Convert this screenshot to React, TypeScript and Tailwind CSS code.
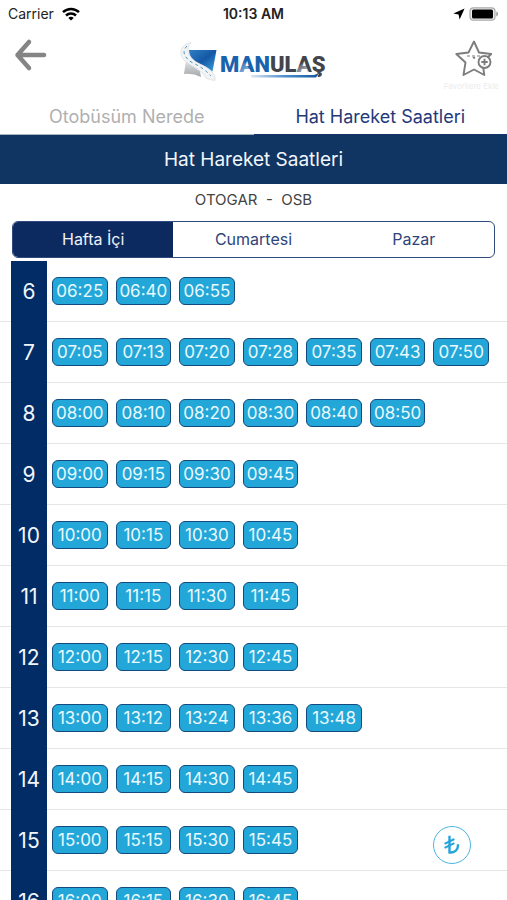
import React, { useState } from 'react';

interface HourRow {
  hour: number;
  minutes: string[];
}

const quarters = ['00', '15', '30', '45'];

const timetable: HourRow[] = [
  { hour: 6, minutes: ['25', '40', '55'] },
  { hour: 7, minutes: ['05', '13', '20', '28', '35', '43', '50'] },
  { hour: 8, minutes: ['00', '10', '20', '30', '40', '50'] },
  { hour: 9, minutes: quarters },
  { hour: 10, minutes: quarters },
  { hour: 11, minutes: quarters },
  { hour: 12, minutes: quarters },
  { hour: 13, minutes: ['00', '12', '24', '36', '48'] },
  { hour: 14, minutes: quarters },
  { hour: 15, minutes: quarters },
  { hour: 16, minutes: quarters },
];

const days = ['Hafta İçi', 'Cumartesi', 'Pazar'];

const StatusBar = () => (
  <div className="grid h-7 shrink-0 grid-cols-3 items-center px-2 text-sm text-[#222]">
    <div className="flex items-center gap-2">
      <span>Carrier</span>
      <svg width="18" height="14" viewBox="0 0 18 14" fill="none" stroke="#000" strokeWidth="2.5">
        <path d="M1 5.2C5.5 0.9 12.5 0.9 17 5.2" />
        <path d="M4 8.5C6.8 5.9 11.2 5.9 14 8.5" />
        <path d="M9 13.6L6.3 10.9C7.8 9.5 10.2 9.5 11.7 10.9Z" fill="#000" stroke="none" />
      </svg>
    </div>
    <span className="text-center font-semibold">10:13 AM</span>
    <div className="flex items-center justify-end gap-1">
      <svg width="12" height="12" viewBox="0 0 12 12">
        <path d="M11.6 0.4L6.6 11.6L5.6 6.4L0.4 5.4Z" fill="#000" />
      </svg>
      <svg width="30" height="14" viewBox="0 0 30 14">
        <rect x="1" y="0.8" width="25" height="12.4" rx="3.5" fill="#eee" stroke="#aaa" strokeWidth="1.2" />
        <rect x="3" y="2.6" width="21" height="8.8" rx="1.5" fill="#000" />
        <path d="M27.3 4.5C29.6 5.3 29.6 8.7 27.3 9.5Z" fill="#999" />
      </svg>
    </div>
  </div>
);

const Logo = () => (
  <svg width="150" height="44" viewBox="0 0 150 44" role="img" aria-label="MANULAŞ">
    <defs>
      <linearGradient id="badge" x1="0" y1="0" x2="1" y2="1">
        <stop offset="0" stopColor="#2f7fc4" />
        <stop offset="0.5" stopColor="#1558a6" />
        <stop offset="1" stopColor="#3aa5e0" />
      </linearGradient>
      <linearGradient id="road" x1="0" y1="0" x2="0" y2="1">
        <stop offset="0" stopColor="#e4e6e8" />
        <stop offset="1" stopColor="#a2a6aa" />
      </linearGradient>
      <linearGradient id="underline" x1="0" y1="0" x2="1" y2="0">
        <stop offset="0" stopColor="#dfe5f3" />
        <stop offset="0.5" stopColor="#4d8fcb" />
        <stop offset="1" stopColor="#14559f" />
      </linearGradient>
      <linearGradient id="fade" x1="0" y1="0" x2="1" y2="1">
        <stop offset="0" stopColor="#fff" stopOpacity="0" />
        <stop offset="1" stopColor="#fff" stopOpacity="0.7" />
      </linearGradient>
    </defs>
    <path d="M7 20L5 34Q14 33 22 37L20 26Z" fill="url(#road)" />
    <path d="M10 10H37.5L33.5 31.5Q27 26 19 23Q10 19 10 10Z" fill="url(#badge)" />
    <path d="M12 2.5C0 5 -1 15 7 22C15 28 24 31 27 38Q31 40 36 40.5C37 34 31 29 22 24.5C12 20 5 12 12 2.5Z" fill="#f1f3f4" stroke="#d3d7da" strokeWidth="0.6" />
    <path d="M8 6C2 12 6 18 13 22.5Q25 28 32 36" fill="none" stroke="#4a8fc2" strokeWidth="1" strokeDasharray="3 3" />
    <text x="41" y="32" fontFamily="Roboto, sans-serif" fontSize="22" fontWeight="900">
      <tspan fill="#1962ad">MAN</tspan>
      <tspan fill="#41454d">ULAŞ</tspan>
    </text>
    <path d="M61 25L66 22L72 32H61Z" fill="url(#fade)" />
    <path d="M119 27L125 22L130 32H118Z" fill="url(#fade)" />
    <path d="M72 35H135L140 33L137 37.5H72Z" fill="url(#underline)" />
  </svg>
);

const Header = () => (
  <header className="flex h-[70px] shrink-0 items-start justify-between px-2">
    <div className="flex flex-1">
      <button aria-label="Geri" className="px-1.5 py-2.5">
        <svg width="34" height="34" viewBox="0 0 34 34" fill="none" stroke="#858585" strokeWidth="4.5" strokeLinecap="round" strokeLinejoin="round">
          <path d="M30 17H3.5M15 4L3.5 17L15 30" />
        </svg>
      </button>
    </div>
    <div className="pt-3">
      <Logo />
    </div>
    <div className="flex flex-1 justify-end">
      <button className="flex flex-col items-center gap-0.5 pt-3">
        <svg width="46" height="38" viewBox="-6 0 46 38" fill="none" stroke="#7d7d7d" strokeWidth="1.9" strokeLinejoin="round">
          <path d="M20 1.5L25 12.5L37.2 14L28.5 22.5L30.3 35L20 29.5L9.5 35L11.5 22.5L2.3 14L14.5 12.5Z" />
          <path d="M13 16H27" strokeDasharray="3 2" strokeWidth="1.2" />
          <path d="M19 17L20 18.5L21 17" strokeWidth="1.2" />
          <circle cx="30.5" cy="22" r="6" fill="#fff" />
          <path d="M30.5 18.8V25.2M27.3 22H33.7" />
        </svg>
        <span className="text-[8px] leading-3 text-[#ececec]">Favorilere Ekle</span>
      </button>
    </div>
  </header>
);

const App: React.FC = () => {
  const [tab, setTab] = useState('saatler');
  const [day, setDay] = useState(days[0]);

  const tabClass = (name: string) =>
    `flex-1 border-b pt-0.5 text-lg ${
      tab === name ? 'border-[#12356b] text-[#24397a]' : 'border-[#a9b4bd] text-[#b0b0b0]'
    }`;

  return (
    <div className="relative flex h-screen flex-col overflow-hidden bg-white font-[Inter,sans-serif]">
      <StatusBar />
      <Header />

      <nav className="flex h-[37px] shrink-0">
        <button onClick={() => setTab('nerede')} className={tabClass('nerede')}>
          Otobüsüm Nerede
        </button>
        <button onClick={() => setTab('saatler')} className={tabClass('saatler')}>
          Hat Hareket Saatleri
        </button>
      </nav>

      <h1 className="flex h-[49px] shrink-0 items-center justify-center bg-[#103562] pt-0.5 text-[19px] text-[#f2f6fb]">
        Hat Hareket Saatleri
      </h1>
      <p className="h-[37px] shrink-0 whitespace-pre pt-1 text-center text-[15px] leading-6 text-[#444]">
        OTOGAR  -  OSB
      </p>

      <div className="mx-3 flex h-[37px] shrink-0 overflow-hidden rounded-md border border-[#2f4a7d]">
        {days.map((name) => (
          <button
            key={name}
            onClick={() => setDay(name)}
            className={`flex-1 pb-0.5 text-base ${day === name ? 'bg-[#0d2a60] text-[#eef2f9]' : 'text-[#2f447a]'}`}
          >
            {name}
          </button>
        ))}
      </div>

      <div className="mt-[3px] min-h-0 flex-1 overflow-y-auto [scrollbar-width:none]">
        {timetable.map(({ hour, minutes }) => (
          <div key={hour} className="flex h-[61px] pl-[11px]">
            <div className="flex w-9 shrink-0 items-center justify-center bg-[#022c66] text-[21px] text-[#f2f6fb]">
              {hour}
            </div>
            <div className="-ml-12 w-3 shrink-0 border-b border-[#e6e6e6]" />
            <div className="ml-9 grid flex-1 grid-cols-7 items-center gap-2 border-b border-[#e6e6e6] pr-[18px] pl-[5px]">
              {minutes.map((minute) => (
                <span
                  key={minute}
                  className="flex h-7 items-center justify-center rounded-md border border-[#134a80] bg-[#22a7d8] pt-0.5 text-[17px] text-[#e9f9ff]"
                >
                  {String(hour).padStart(2, '0')}:{minute}
                </span>
              ))}
            </div>
          </div>
        ))}
      </div>

      <button
        aria-label="Ücret"
        className="absolute right-9 bottom-9 flex size-[38px] items-center justify-center rounded-full border border-[#4db5e2] bg-white"
      >
        <svg width="20" height="22" viewBox="0 0 20 22" fill="none" stroke="#25a4da" strokeWidth="2.4" strokeLinecap="square">
          <path d="M7.5 3V18.5C12.5 19 16 16 16 11.5" />
          <path d="M3.5 9.5L11.5 5.5M3.5 13.5L11.5 9.5" strokeWidth="2" />
        </svg>
      </button>
    </div>
  );
};

export default App;
